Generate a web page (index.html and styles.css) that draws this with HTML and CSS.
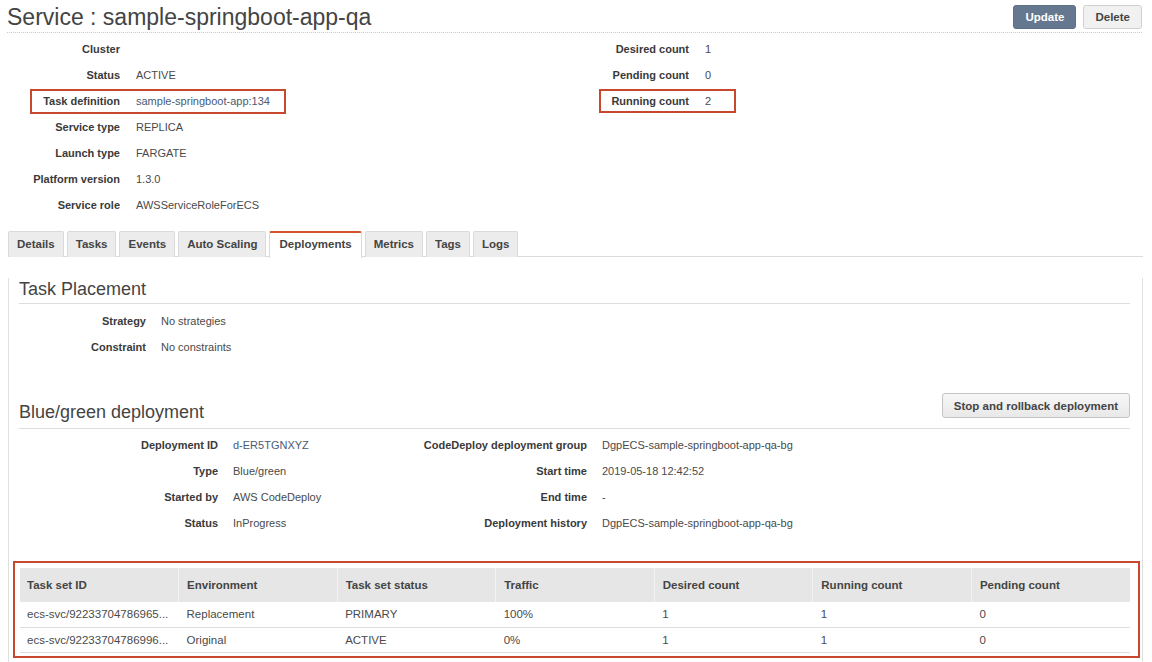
FILE: index.html
```html
<!DOCTYPE html>
<html>
<head>
<meta charset="utf-8">
<title>Service : sample-springboot-app-qa</title>
<link rel="stylesheet" href="styles.css">
</head>
<body>
<div class="page">
  <header class="header">
    <h1 class="title">Service : sample-springboot-app-qa</h1>
    <div class="actions">
      <button class="btn btn-primary">Update</button>
      <button class="btn btn-light">Delete</button>
    </div>
  </header>

  <section class="summary">
    <div class="dl dl-left">
      <div class="row"><span class="k">Cluster</span><span class="v"></span></div>
      <div class="row"><span class="k">Status</span><span class="v">ACTIVE</span></div>
      <div class="row"><span class="k">Task definition</span><span class="v link">sample-springboot-app:134</span><span class="mark mark-task"></span></div>
      <div class="row"><span class="k">Service type</span><span class="v">REPLICA</span></div>
      <div class="row"><span class="k">Launch type</span><span class="v">FARGATE</span></div>
      <div class="row"><span class="k">Platform version</span><span class="v">1.3.0</span></div>
      <div class="row"><span class="k">Service role</span><span class="v">AWSServiceRoleForECS</span></div>
    </div>
    <div class="dl dl-right">
      <div class="row"><span class="k">Desired count</span><span class="v">1</span></div>
      <div class="row"><span class="k">Pending count</span><span class="v">0</span></div>
      <div class="row"><span class="k">Running count</span><span class="v">2</span><span class="mark mark-running"></span></div>
    </div>
  </section>

  <div class="tabbox">
    <nav class="tabs">
      <span class="tab">Details</span>
      <span class="tab">Tasks</span>
      <span class="tab">Events</span>
      <span class="tab">Auto Scaling</span>
      <span class="tab active">Deployments</span>
      <span class="tab">Metrics</span>
      <span class="tab">Tags</span>
      <span class="tab">Logs</span>
    </nav>
    <div class="panel">
      <h2 class="section-title first">Task Placement</h2>
      <div class="dl dl-placement">
        <div class="row"><span class="k">Strategy</span><span class="v">No strategies</span></div>
        <div class="row"><span class="k">Constraint</span><span class="v">No constraints</span></div>
      </div>

      <div class="section-head">
        <h2 class="section-title bg-title">Blue/green deployment</h2>
        <button class="btn btn-grey">Stop and rollback deployment</button>
      </div>
      <div class="deploy">
        <div class="dl dl-dep-left">
          <div class="row"><span class="k">Deployment ID</span><span class="v link">d-ER5TGNXYZ</span></div>
          <div class="row"><span class="k">Type</span><span class="v">Blue/green</span></div>
          <div class="row"><span class="k">Started by</span><span class="v">AWS CodeDeploy</span></div>
          <div class="row"><span class="k">Status</span><span class="v">InProgress</span></div>
        </div>
        <div class="dl dl-dep-right">
          <div class="row"><span class="k">CodeDeploy deployment group</span><span class="v">DgpECS-sample-springboot-app-qa-bg</span></div>
          <div class="row"><span class="k">Start time</span><span class="v">2019-05-18 12:42:52</span></div>
          <div class="row"><span class="k">End time</span><span class="v">-</span></div>
          <div class="row"><span class="k">Deployment history</span><span class="v">DgpECS-sample-springboot-app-qa-bg</span></div>
        </div>
      </div>

      <div class="table-wrap">
        <table class="tsets">
          <thead>
            <tr>
              <th>Task set ID</th>
              <th>Environment</th>
              <th>Task set status</th>
              <th>Traffic</th>
              <th>Desired count</th>
              <th>Running count</th>
              <th>Pending count</th>
            </tr>
          </thead>
          <tbody>
            <tr>
              <td>ecs-svc/92233704786965...</td>
              <td>Replacement</td>
              <td>PRIMARY</td>
              <td>100%</td>
              <td>1</td>
              <td>1</td>
              <td>0</td>
            </tr>
            <tr>
              <td>ecs-svc/92233704786996...</td>
              <td>Original</td>
              <td>ACTIVE</td>
              <td>0%</td>
              <td>1</td>
              <td>1</td>
              <td>0</td>
            </tr>
          </tbody>
        </table>
      </div>
    </div>
  </div>
</div>
</body>
</html>
```

FILE: styles.css
```css
* { box-sizing: border-box; }

html, body {
  margin: 0;
  padding: 0;
  background: #ffffff;
}

body {
  font-family: "Liberation Sans", Arial, Helvetica, sans-serif;
  font-size: 11px;
  color: #444444;
}

.page {
  padding: 0 9px 0 7px;
}

/* Header */
.header {
  display: flex;
  justify-content: space-between;
  align-items: flex-start;
  padding-top: 5px;
  padding-bottom: 3px;
  border-bottom: 1px dotted #c9c9c9;
  margin-right: 1px;
}

.title {
  margin: 0;
  font-size: 23px;
  line-height: 24px;
  font-weight: normal;
  color: #444444;
}

.actions {
  display: flex;
  gap: 7px;
}

.btn {
  font-family: "Liberation Sans", Arial, Helvetica, sans-serif;
  font-size: 11.5px;
  font-weight: bold;
  height: 24px;
  border-radius: 3px;
  padding: 0 11px;
  cursor: pointer;
}

.btn-primary {
  background: #66788f;
  border: 1px solid #5d6f85;
  color: #ffffff;
}

.btn-light {
  background: #f1f1f1;
  border: 1px solid #d0d0d0;
  color: #444444;
}

.btn-grey {
  height: 25px;
  background: linear-gradient(#f7f7f7, #e8e8e8);
  border: 1px solid #c4c4c4;
  color: #444444;
}

/* Definition rows */
.dl .row {
  position: relative;
  display: flex;
  align-items: center;
  height: 26px;
  line-height: 26px;
  white-space: nowrap;
}

.dl .k {
  flex: none;
  text-align: right;
  font-weight: bold;
  color: #3a3a3a;
}

.dl .v {
  margin-left: 16px;
  color: #4a4a4a;
}

.dl .v.link {
  color: #4b5a74;
}

.summary {
  display: flex;
  padding-top: 3px;
}

.dl-left {
  width: 569px;
}

.dl-left .k,
.dl-right .k {
  width: 113px;
}

.mark {
  position: absolute;
  border: 2px solid #c8472f;
  pointer-events: none;
}

.mark-task {
  left: 23px;
  top: 1px;
  width: 256px;
  height: 25px;
}

.mark-running {
  left: 23px;
  top: 1px;
  width: 137px;
  height: 24px;
}

/* Tabs */
.tabbox {
  margin-top: 13px;
  margin-left: 1px;
}

.tabs {
  display: flex;
  gap: 3px;
  border-bottom: 1px solid #dcdcdc;
  height: 26px;
}

.tab {
  height: 26px;
  line-height: 24px;
  padding: 0 8px;
  background: #ececec;
  border: 1px solid #dadada;
  border-bottom: none;
  border-radius: 2px 2px 0 0;
  font-size: 11.5px;
  font-weight: bold;
  color: #444444;
}

.tab.active {
  background: #ffffff;
  border-top: 2px solid #d4532f;
  line-height: 23px;
  height: 27px;
  padding: 0 9px;
}

/* Panel */
.panel {
  border-left: 1px solid #e0e0e0;
  border-right: 1px solid #e0e0e0;
  padding: 0 12px 6px 10px;
}

.section-title {
  margin: 0;
  font-size: 18px;
  line-height: 22px;
  font-weight: normal;
  color: #444444;
}

.section-title.first {
  margin-top: 21px;
  padding-bottom: 3px;
  border-bottom: 1px solid #dddddd;
}

.dl-placement {
  margin-top: 4px;
}

.dl-placement .k {
  width: 127px;
}

.dl-placement .v {
  margin-left: 15px;
}

.section-head {
  display: flex;
  justify-content: space-between;
  margin-top: 33px;
  height: 36px;
  border-bottom: 1px solid #dddddd;
}

.bg-title {
  align-self: flex-end;
  padding-bottom: 5px;
}

.section-head .btn {
  align-self: flex-start;
}

.deploy {
  display: flex;
  margin-top: 3px;
}

.dl-dep-left {
  width: 381px;
}

.dl-dep-left .k {
  width: 199px;
}

.dl-dep-right .k {
  width: 187px;
}

.dl-dep-left .v,
.dl-dep-right .v {
  margin-left: 15px;
}

/* Table */
.table-wrap {
  margin: 25px -10px 0 -6px;
  border: 2px solid #c8472f;
  padding: 5px 8px 3px 5px;
}

.tsets {
  width: 100%;
  table-layout: fixed;
  border-collapse: collapse;
  font-size: 11.5px;
}

.tsets th {
  height: 34px;
  background: #e6e6e6;
  text-align: left;
  font-weight: bold;
  color: #444444;
  padding: 0 8px;
  border-left: 1px solid #f3f3f3;
  white-space: nowrap;
}

.tsets th:first-child {
  border-left: none;
  padding-left: 7px;
}

.tsets td {
  height: 25px;
  padding: 0 8px;
  border-bottom: 1px solid #dddddd;
  color: #4a4a4a;
  white-space: nowrap;
  overflow: hidden;
}

.tsets td:first-child {
  padding-left: 7px;
}
```
